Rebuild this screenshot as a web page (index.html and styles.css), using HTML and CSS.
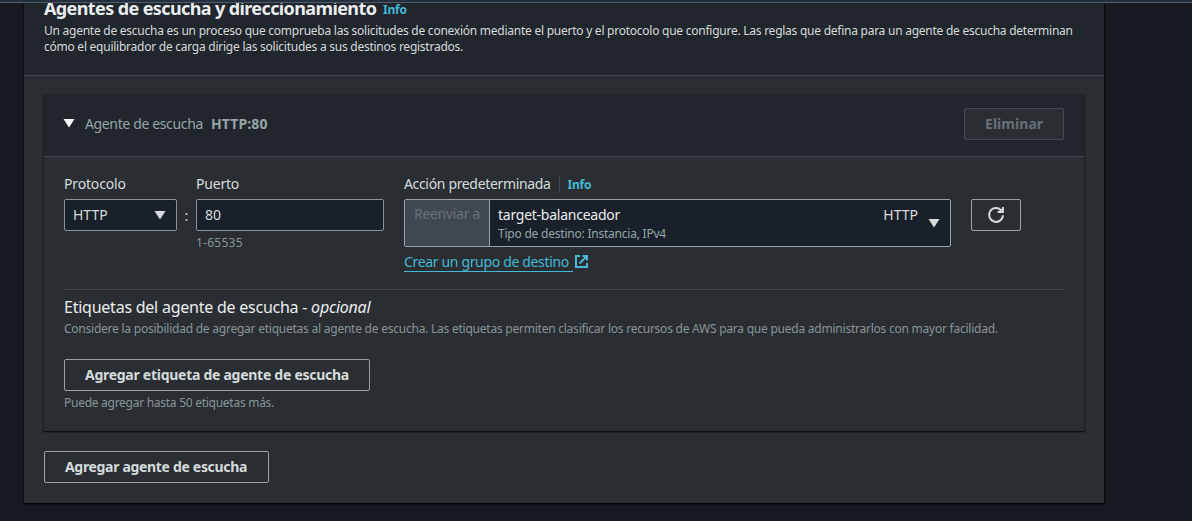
FILE: index.html
```html
<!DOCTYPE html>
<html lang="es">
<head>
<meta charset="utf-8">
<title>Agentes de escucha y direccionamiento</title>
<link rel="stylesheet" href="styles.css">
</head>
<body>
<div class="topbar"></div>
<main class="container">
  <header class="container-header">
    <div class="title-row">
      <h2 class="title">Agentes de escucha y direccionamiento</h2>
      <a class="info">Info</a>
    </div>
    <p class="description"><span class="d1">Un agente de escucha es un proceso que comprueba las solicitudes de conexión mediante el puerto y el protocolo que configure. Las reglas que defina para un agente de escucha determinan</span><br><span class="d2">cómo el equilibrador de carga dirige las solicitudes a sus destinos registrados.</span></p>
  </header>
  <div class="container-body">
    <section class="listener">
      <div class="listener-header">
        <svg class="caret" width="12" height="10" viewBox="0 0 12 10"><path d="M0.5 1h11L6 9.5z"/></svg>
        <span class="listener-label">Agente de escucha</span>
        <strong class="listener-name">HTTP:80</strong>
        <button class="button disabled">Eliminar</button>
      </div>
      <div class="listener-body">
        <div class="fields">
          <div class="field protocol">
            <label class="label l-protocol">Protocolo</label>
            <div class="control select"><span class="t-http">HTTP</span><svg class="caret" width="12" height="10" viewBox="0 0 12 10"><path d="M0.5 1h11L6 9.5z"/></svg></div>
          </div>
          <span class="colon">:</span>
          <div class="field port">
            <label class="label l-port">Puerto</label>
            <div class="control">80</div>
            <span class="hint h-port">1-65535</span>
          </div>
          <div class="field action">
            <div class="label-row"><label class="label l-action">Acción predeterminada</label><a class="info divided">Info</a></div>
            <div class="target">
              <div class="prefix"><span>Reenviar a</span></div>
              <div class="target-select">
                <div class="target-text"><span class="t-name">target-balanceador</span><span class="t-type">Tipo de destino: Instancia, IPv4</span></div>
                <span class="t-http">HTTP</span>
                <svg class="caret" width="12" height="10" viewBox="0 0 12 10"><path d="M0.5 1h11L6 9.5z"/></svg>
              </div>
            </div>
            <a class="create"><span class="create-text">Crear un grupo de destino</span><svg width="15" height="15" viewBox="0 0 15 15"><path d="M6 2H2v11h11V9M8.500 2H13v4.500M13 2L5.500 9.500"/></svg></a>
          </div>
          <button class="button refresh" aria-label="Actualizar"><svg width="18" height="18" viewBox="0 0 18 18"><path class="arc" d="M15.900 9.200A6.900 6.900 0 1 1 14 4.200L15.500 5.800"/><path class="arc" d="M15.900 1v5.100h-5.300"/><path class="head" d="M15.500 2.500v3.500h-4z"/></svg></button>
        </div>
        <div class="tags">
          <h3 class="tags-title">Etiquetas del agente de escucha - <em>opcional</em></h3>
          <p class="hint h-tags">Considere la posibilidad de agregar etiquetas al agente de escucha. Las etiquetas permiten clasificar los recursos de AWS para que pueda administrarlos con mayor facilidad.</p>
          <button class="button add-tag"><span>Agregar etiqueta de agente de escucha</span></button>
          <p class="hint h-limit">Puede agregar hasta 50 etiquetas más.</p>
        </div>
      </div>
    </section>
    <button class="button add-listener"><span>Agregar agente de escucha</span></button>
  </div>
</main>
</body>
</html>
```
FILE: styles.css
```css
* { box-sizing: border-box; }
body {
  margin: 0;
  height: 521px;
  overflow: hidden;
  background: #16191f;
  color: #d5dbdb;
  font: 14px/22px "Noto Sans", "Open Sans", sans-serif;
  white-space: nowrap;
}
h2, h3, p { margin: 0; }
.topbar {
  position: relative;
  z-index: 1;
  height: 3px;
  background: #232f3e;
  border-bottom: 1px solid #545b64;
}
.container {
  width: 1080px;
  height: 500px;
  margin-left: 24px;
  background: #2a2e33;
  box-shadow: 0 1px 1px #000, 1px 1px 1px #0a0c10, -1px 1px 1px #0e1116;
}
.container-header {
  display: flow-root;
  height: 73px;
  padding: 0 20px;
  background: #21252c;
  border-bottom: 1px solid #414750;
}
.title-row { display: flex; align-items: center; gap: 8px; height: 20px; margin-top: -5px; }
.title { width: 331px; font-size: 18px; line-height: 22px; color: #eaeded; letter-spacing: -0.61px; }
.info { font-size: 12px; font-weight: 700; color: #44b9d6; letter-spacing: -0.2px; }
.title-row .info { padding-top: 4px; }
.description { margin-top: 5px; font-size: 12px; line-height: 16px; }
.d1, .d2 { letter-spacing: -0.25px; }
.container-body { padding: 18px 20px 0; }
.listener { height: 337px; box-shadow: 0 1px 1px #0c0f12, 1px 1px 1px #1d2126, -1px 1px 1px #1d2126; }
.listener-header {
  display: flex;
  align-items: center;
  height: 63px;
  padding: 0 20px 2px;
  background: #21252c;
  border-bottom: 1px solid #414750;
  color: #95a5a6;
}
.caret { display: block; flex: none; fill: #d5dbdb; }
.listener-header .caret { margin: 0 10px 2px -1px; fill: #fafafa; }
.listener-label { width: 126px; letter-spacing: -0.36px; }
.listener-name { letter-spacing: 0.1px; }
.button {
  height: 32px;
  padding: 0 20px;
  border: 1px solid #95a5a6;
  border-radius: 2px;
  background: #2a2e33;
  color: #d5dbdb;
  font: 700 14px/20px "Noto Sans", sans-serif;
  text-align: left;
}
.disabled { width: 100px; margin-left: auto; border-color: #444b56; color: #687078; letter-spacing: 0.05px; }
.listener-body { padding: 16px 20px 0; }
.fields { display: flex; height: 117px; border-bottom: 1px solid #414750; }
.field { display: flex; flex-direction: column; align-items: stretch; }
.label { height: 22px; margin-bottom: 4px; }
.l-protocol { letter-spacing: -0.16px; }
.l-port { letter-spacing: -0.2px; }
.l-action { letter-spacing: -0.34px; }
.label-row { display: flex; height: 26px; }
.control {
  display: flex;
  align-items: center;
  justify-content: space-between;
  height: 32px;
  padding: 0 10px 0 8px;
  border: 1px solid #879596;
  border-radius: 2px;
  background: #1a2029;
}
.protocol { width: 113px; }
.port { width: 188px; }
.colon { width: 19px; padding-top: 32px; text-align: center; }
.hint { font-size: 12px; line-height: 16px; color: #879596; letter-spacing: -0.235px; }
.h-port { margin-top: 4px; letter-spacing: 0.25px; }
.action { width: 547px; margin-left: 20px; }
.divided { height: 18px; margin: 2px 0 0 8px; padding-left: 8px; border-left: 1px solid #414750; line-height: 20px; }
.target { display: flex; height: 48px; border: 1px solid #95a5a6; border-radius: 2px; background: #1a2029; }
.prefix { width: 85px; padding: 3px 9px; background: #414750; border-right: 1px solid #95a5a6; color: #687078; letter-spacing: -0.3px; }
.target-select { display: flex; flex: 1; padding: 4px 10px 0 8px; }
.target-text { display: flex; flex: 1; flex-direction: column; }
.t-name { color: #eaeded; height: 22px; letter-spacing: -0.25px; }
.t-type { font-size: 12px; line-height: 16px; color: #95a5a6; letter-spacing: -0.22px; }
.target-select .caret { margin: 14px 0 0 10px; }
.create { display: flex; align-items: flex-start; color: #44b9d6; margin-top: 5px; }
.create-text { width: 169px; height: 20px; line-height: 20px; border-bottom: 1px solid #44b9d6; letter-spacing: -0.34px; }
.create svg { margin: 2px 0 0 1px; fill: none; stroke: #44b9d6; stroke-width: 2; }
.refresh { width: 50px; margin: 26px 0 0 20px; padding: 0 15px; }
.refresh svg { display: block; }
.arc { fill: none; stroke: #d5dbdb; stroke-width: 2; }
.head { fill: #d5dbdb; }
.tags { padding-top: 5px; }
.tags-title { font-size: 16px; font-weight: 400; line-height: 24px; color: #eaeded; letter-spacing: -0.24px; }
.h-tags { margin-top: 2px; }
.add-tag { display: block; width: 306px; margin-top: 22px; letter-spacing: -0.27px; }
.h-limit { margin-top: 4px; letter-spacing: -0.27px; }
.add-listener { display: block; width: 225px; margin-top: 20px; letter-spacing: -0.32px; }
```
